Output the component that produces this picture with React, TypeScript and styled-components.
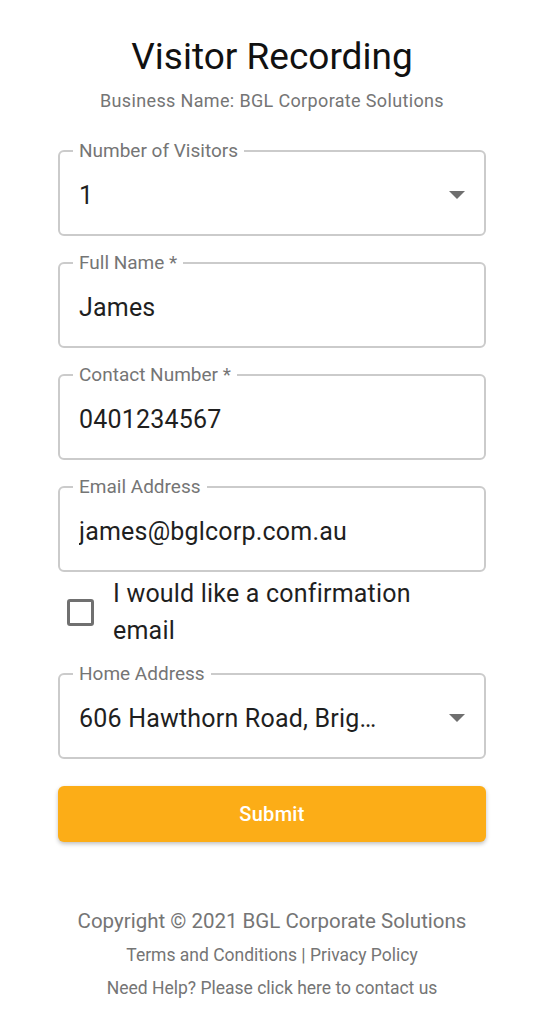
import styled, { createGlobalStyle } from "styled-components";

const GlobalStyle = createGlobalStyle`
  body {
    margin: 0;
    background: #ffffff;
    font-family: Roboto, "Liberation Sans", sans-serif;
  }
`;

const Page = styled.div`
  display: flex;
  flex-direction: column;
  width: 428px;
  padding: 35px 66px 24px 58px;
`;

const Title = styled.h1`
  margin: 0;
  font-size: 37px;
  line-height: 44px;
  font-weight: 400;
  color: #111111;
  text-align: center;
`;

const Subtitle = styled.div`
  margin-top: 10px;
  font-size: 18px;
  letter-spacing: 0.35px;
  line-height: 24px;
  color: #757575;
  text-align: center;
`;

const Form = styled.form`
  display: flex;
  flex-direction: column;
  margin-top: 27px;
`;

const Field = styled.fieldset<{ $mb?: number }>`
  margin: 0 0 ${(p) => (p.$mb ?? 16)}px 0;
  padding: 0 19px;
  border: 2px solid #cbcbcb;
  border-radius: 6px;
  min-width: 0;
`;

const Legend = styled.legend`
  padding: 0 6px;
  margin-left: -6px;
  font-size: 19px;
  line-height: 22px;
  color: #757575;
`;

const ValueRow = styled.div`
  display: flex;
  align-items: center;
  justify-content: space-between;
  height: 72px;
  padding-bottom: 6px;
  box-sizing: border-box;
  font-size: 25px;
  letter-spacing: 0.2px;
  color: #1f1f1f;
`;

const Value = styled.span`
  white-space: nowrap;
  overflow: hidden;
`;

const CheckRow = styled.label`
  display: flex;
  align-items: center;
  gap: 19px;
  margin: 2px 0 14px 9px;
`;

const Box = styled.span`
  flex: none;
  width: 21px;
  height: 21px;
  border: 3px solid #707070;
  border-radius: 3px;
`;

const CheckText = styled.span`
  max-width: 320px;
  font-size: 25px;
  letter-spacing: 0.2px;
  line-height: 37px;
  color: #1f1f1f;
`;

const SubmitButton = styled.button`
  margin-top: 11px;
  height: 56px;
  border: none;
  border-radius: 6px;
  background: #fcad17;
  color: #ffffff;
  font-family: Roboto, "Liberation Sans", sans-serif;
  font-size: 20px;
  font-weight: 500;
  letter-spacing: 0.3px;
  box-shadow: 0 2px 4px rgba(0, 0, 0, 0.25);
`;

const Footer = styled.footer`
  display: flex;
  flex-direction: column;
  align-items: center;
  margin-top: 65px;
  color: #757575;
`;

const FooterLine = styled.div<{ $size: number; $mt: number }>`
  margin-top: ${(p) => p.$mt}px;
  font-size: ${(p) => p.$size}px;
  line-height: ${(p) => Math.round(p.$size + 7)}px;
`;

const Arrow = () => (
  <svg width="16" height="8" viewBox="0 0 16 8" style={{ flex: "none" }}>
    <polygon points="0,0 16,0 8,8" fill="#6f6f6f" />
  </svg>
);

type InputProps = { label: string; value: string; select?: boolean; mb?: number };

const Input = ({ label, value, select, mb }: InputProps) => (
  <Field $mb={mb}>
    <Legend>{label}</Legend>
    <ValueRow>
      <Value>{value}</Value>
      {select && <Arrow />}
    </ValueRow>
  </Field>
);

export default function App() {
  return (
    <>
      <GlobalStyle />
      <Page>
        <Title>Visitor Recording</Title>
        <Subtitle>Business Name: BGL Corporate Solutions</Subtitle>
        <Form onSubmit={(e) => e.preventDefault()}>
          <Input label="Number of Visitors" value="1" select />
          <Input label="Full Name *" value="James" />
          <Input label="Contact Number *" value="0401234567" />
          <Input label="Email Address" value="james@bglcorp.com.au" mb={1} />
          <CheckRow>
            <Box />
            <CheckText>I would like a confirmation email</CheckText>
          </CheckRow>
          <Input label="Home Address" value="606 Hawthorn Road, Brig…" select />
          <SubmitButton type="submit">Submit</SubmitButton>
        </Form>
        <Footer>
          <FooterLine $size={20.5} $mt={0}>
            Copyright © 2021 BGL Corporate Solutions
          </FooterLine>
          <FooterLine $size={17.5} $mt={8}>
            Terms and Conditions | Privacy Policy
          </FooterLine>
          <FooterLine $size={17.5} $mt={8}>
            Need Help? Please click here to contact us
          </FooterLine>
        </Footer>
      </Page>
    </>
  );
}
